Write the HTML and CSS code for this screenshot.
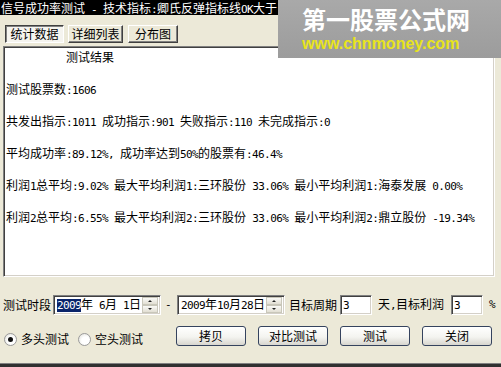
FILE: index.html
```html
<!DOCTYPE html>
<html>
<head>
<meta charset="utf-8">
<link rel="stylesheet" href="styles.css">
</head>
<body>
<div class="title"><span class="title-text">信号成功率测试<span class="a"> - </span>技术指标<span class="a">:</span>卿氏反弹指标线<span class="a">OK</span>大于</span></div>

<div class="watermark">
  <div class="wm-cn">第一股票公式网</div>
  <div class="wm-url">www.chnmoney.com</div>
</div>

<div class="tabs">
  <div class="tab tab-on t1">统计数据</div>
  <div class="tab t2">详细列表</div>
  <div class="tab t3">分布图</div>
</div>

<div class="memo">
  <p class="head">测试结果</p>
  <p>测试股票数<span class="a">:1606</span></p>
  <p>共发出指示<span class="a">:1011 </span>成功指示<span class="a">:901 </span>失败指示<span class="a">:110 </span>未完成指示<span class="a">:0</span></p>
  <p>平均成功率<span class="a">:89.12%, </span>成功率达到<span class="a">50%</span>的股票有<span class="a">:46.4%</span></p>
  <p>利润<span class="a">1</span>总平均<span class="a">:9.02% </span>最大平均利润<span class="a">1:</span>三环股份<span class="a"> 33.06% </span>最小平均利润<span class="a">1:</span>海泰发展<span class="a"> 0.00%</span></p>
  <p>利润<span class="a">2</span>总平均<span class="a">:6.55% </span>最大平均利润<span class="a">2:</span>三环股份<span class="a"> 33.06% </span>最小平均利润<span class="a">2:</span>鼎立股份<span class="a"> -19.34%</span></p>
</div>

<div class="row1">
  <span class="lbl">测试时段</span>
  <div class="date d1">
    <span class="dtext"><span class="a sel">2009</span>年<span class="a"> 6</span>月<span class="a"> 1</span>日</span>
    <div class="spin"><div class="sb up"></div><div class="sb down"></div></div>
  </div>
  <span class="dash a">-</span>
  <div class="date">
    <span class="dtext"><span class="a">2009</span>年<span class="a">10</span>月<span class="a">28</span>日</span>
    <div class="spin"><div class="sb up"></div><div class="sb down"></div></div>
  </div>
  <span class="lbl l2">目标周期</span>
  <div class="inp i1"><span class="a">3</span></div>
  <span class="lbl l3">天<span class="a">,</span>目标利润</span>
  <div class="inp i2"><span class="a">3</span></div>
  <span class="pct a">%</span>
</div>

<div class="row2">
  <div class="radios">
    <span class="radio on"></span><span class="rl">多头测试</span>
    <span class="radio r2"></span><span class="rl">空头测试</span>
  </div>
  <div class="btns">
    <div class="btn">拷贝</div>
    <div class="btn">对比测试</div>
    <div class="btn">测试</div>
    <div class="btn">关闭</div>
  </div>
</div>

<div class="frame-bottom"></div>
</body>
</html>
```
FILE: styles.css
```css
html, body {
  margin: 0;
  padding: 0;
}
body {
  width: 501px;
  height: 367px;
  overflow: hidden;
  position: relative;
  background: #ece9d8;
  font: 12px/16px "Noto Sans CJK SC", sans-serif;
  color: #000;
}
.a {
  font-family: "DejaVu Sans Mono", monospace;
  font-size: 11px;
  letter-spacing: -0.62px;
  white-space: pre;
}

.title {
  height: 15px;
  line-height: 15px;
  background: #000;
  color: #fff;
  padding-left: 1px;
}
.title-text {
  display: block;
  width: 277px;
  white-space: pre;
  overflow: hidden;
}

.watermark {
  position: absolute;
  left: 278px;
  top: 0;
  width: 223px;
  height: 58px;
  background: linear-gradient(#a9a9a9, #9c9c9c);
  box-sizing: border-box;
  padding-left: 24px;
}
.wm-cn {
  margin-top: 7px;
  font: 700 24px/24px "Noto Sans CJK SC", sans-serif;
  color: #fff;
}
.wm-url {
  margin-top: 4px;
  font: 700 16px/17px "Liberation Sans", sans-serif;
  color: #e8e41c;
}

.tabs {
  display: flex;
  margin: 10px 0 0 5px;
  height: 18px;
}
.tab {
  box-sizing: border-box;
  height: 18px;
  line-height: 16px;
  text-align: center;
  border: 1px solid;
  border-color: #fff #404040 #404040 #fff;
  box-shadow: inset -1px -1px #808080;
}
.tab-on {
  border-color: #404040 #fff #fff #404040;
  box-shadow: inset 1px 1px #808080;
  background: #f5f4ef;
}
.t1 { width: 59px; }
.t2 { width: 55px; margin-left: 4px; }
.t3 { width: 50px; margin-left: 5px; }

.memo {
  margin: 3px 6px 0 3px;
  height: 231px;
  box-sizing: border-box;
  overflow: hidden;
  background: #fff;
  border: 1px solid;
  border-color: #808080 #fff #fff #808080;
  box-shadow: inset 1px 1px #404040, inset -1px -1px #d4d0c8;
  padding: 2px 0 0 2px;
}
.memo p {
  margin: 0 0 16px;
  height: 16px;
  white-space: pre;
}
.memo .head {
  padding-left: 60px;
}

.row1 {
  display: flex;
  align-items: center;
  margin: 18px 0 0 3px;
  height: 20px;
}
.lbl {
  white-space: pre;
}
.date {
  margin-left: 2px;
  width: 108px;
  height: 20px;
  box-sizing: border-box;
  background: #fff;
  border: 1px solid;
  border-color: #808080 #fff #fff #808080;
  box-shadow: inset 1px 1px #404040, inset -1px -1px #d4d0c8;
  display: flex;
  align-items: center;
  padding: 2px;
}
.dtext {
  flex: 1;
  padding-left: 1px;
  white-space: pre;
  line-height: 14px;
}
.sel {
  background: #0a246a;
  color: #fff;
}
.spin {
  width: 16px;
  height: 16px;
  display: flex;
  flex-direction: column;
}
.sb {
  flex: 1;
  position: relative;
  box-sizing: border-box;
  border: 1px solid #c9c7ba;
  background: linear-gradient(#fafaf7, #e2dfd3);
}
.sb::after {
  content: "";
  position: absolute;
  left: 5px;
  top: 2px;
  border-left: 2px solid transparent;
  border-right: 2px solid transparent;
}
.up::after {
  border-bottom: 2px solid #222;
}
.down::after {
  border-top: 2px solid #222;
}
.dash {
  width: 14px;
  text-align: center;
}
.l2 { margin-left: 4px; }
.l3 { margin-left: 6px; }
.inp {
  width: 32px;
  height: 20px;
  box-sizing: border-box;
  background: #fff;
  border: 1px solid;
  border-color: #808080 #fff #fff #808080;
  box-shadow: inset 1px 1px #404040, inset -1px -1px #d4d0c8;
  padding: 1px 0 0 2px;
  line-height: 14px;
}
.i1 { margin-left: 3px; }
.i2 { margin-left: 7px; }
.pct { margin-left: 6px; }

.row2 {
  display: flex;
  margin-top: 11px;
  height: 20px;
}
.radios {
  display: flex;
  align-items: center;
  padding-top: 6px;
  padding-left: 4px;
  height: 14px;
}
.radio {
  width: 13px;
  height: 13px;
  box-sizing: border-box;
  border-radius: 50%;
  border: 1px solid #9a9a9a;
  background: radial-gradient(circle at 60% 60%, #fff 40%, #dcdcd4);
  position: relative;
}
.radio.on::after {
  content: "";
  position: absolute;
  left: 3px;
  top: 3px;
  width: 5px;
  height: 5px;
  border-radius: 50%;
  background: #111;
}
.rl { margin-left: 4px; }
.r2 { margin-left: 9px; }

.btns {
  display: flex;
  margin-left: 33px;
  gap: 12px;
}
.btn {
  width: 70px;
  height: 20px;
  box-sizing: border-box;
  border: 1px solid #35435e;
  border-radius: 3px;
  background: linear-gradient(#ffffff, #f4f4f0 55%, #d8d6cf);
  text-align: center;
  line-height: 18px;
}

.frame-bottom {
  margin-top: 17px;
  height: 4px;
  background: #303030;
  border-top: 1px solid #808080;
}
```
